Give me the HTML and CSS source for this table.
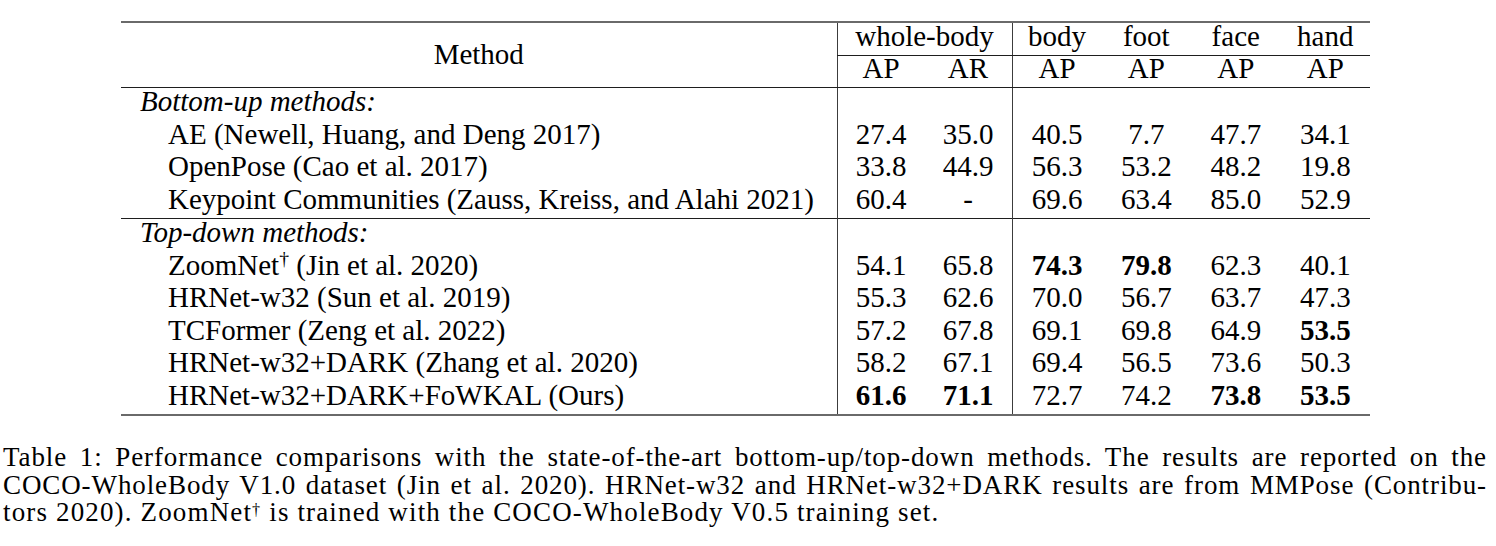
FILE: index.html
```html
<!DOCTYPE html>
<html lang="en">
<head>
<meta charset="utf-8">
<title>Table 1</title>
<link rel="stylesheet" href="styles.css">
</head>
<body>
<div class="page">
  <table class="results">
    <colgroup>
      <col class="c-method">
      <col class="c-wb">
      <col class="c-wb">
      <col class="c-part">
      <col class="c-part">
      <col class="c-part">
      <col class="c-part">
    </colgroup>
    <thead>
      <tr class="head1">
        <th rowspan="2" class="method-head">Method</th>
        <th colspan="2" class="vl under">whole-body</th>
        <th class="vl under">body</th>
        <th class="under">foot</th>
        <th class="under">face</th>
        <th class="under">hand</th>
      </tr>
      <tr class="head2">
        <th class="vl">AP</th>
        <th>AR</th>
        <th class="vl">AP</th>
        <th>AP</th>
        <th>AP</th>
        <th>AP</th>
      </tr>
    </thead>
    <tbody class="group">
      <tr><td class="group-label">Bottom-up methods:</td><td class="vl"></td><td></td><td class="vl"></td><td></td><td></td><td></td></tr>
      <tr><td class="name">AE (Newell, Huang, and Deng 2017)</td><td class="vl">27.4</td><td>35.0</td><td class="vl">40.5</td><td>7.7</td><td>47.7</td><td>34.1</td></tr>
      <tr><td class="name">OpenPose (Cao et al. 2017)</td><td class="vl">33.8</td><td>44.9</td><td class="vl">56.3</td><td>53.2</td><td>48.2</td><td>19.8</td></tr>
      <tr><td class="name">Keypoint Communities (Zauss, Kreiss, and Alahi 2021)</td><td class="vl">60.4</td><td>-</td><td class="vl">69.6</td><td>63.4</td><td>85.0</td><td>52.9</td></tr>
    </tbody>
    <tbody class="group">
      <tr><td class="group-label">Top-down methods:</td><td class="vl"></td><td></td><td class="vl"></td><td></td><td></td><td></td></tr>
      <tr><td class="name">ZoomNet<sup class="dagger">†</sup> (Jin et al. 2020)</td><td class="vl">54.1</td><td>65.8</td><td class="vl best">74.3</td><td class="best">79.8</td><td>62.3</td><td>40.1</td></tr>
      <tr><td class="name">HRNet-w32 (Sun et al. 2019)</td><td class="vl">55.3</td><td>62.6</td><td class="vl">70.0</td><td>56.7</td><td>63.7</td><td>47.3</td></tr>
      <tr><td class="name">TCFormer (Zeng et al. 2022)</td><td class="vl">57.2</td><td>67.8</td><td class="vl">69.1</td><td>69.8</td><td>64.9</td><td class="best">53.5</td></tr>
      <tr><td class="name">HRNet-w32+DARK (Zhang et al. 2020)</td><td class="vl">58.2</td><td>67.1</td><td class="vl">69.4</td><td>56.5</td><td>73.6</td><td>50.3</td></tr>
      <tr><td class="name">HRNet-w32+DARK+FoWKAL (Ours)</td><td class="vl best">61.6</td><td class="best">71.1</td><td class="vl">72.7</td><td>74.2</td><td class="best">73.8</td><td class="best">53.5</td></tr>
    </tbody>
  </table>

  <p class="caption">
    <span class="cap-line just">Table 1: Performance comparisons with the state-of-the-art bottom-up/top-down methods. The results are reported on the</span>
    <span class="cap-line just">COCO-WholeBody V1.0 dataset (Jin et al. 2020). HRNet-w32 and HRNet-w32+DARK results are from MMPose (Contribu-</span>
    <span class="cap-line last">tors 2020). ZoomNet<sup class="dagger cap-dagger">†</sup> is trained with the COCO-WholeBody V0.5 training set.</span>
  </p>
</div>
</body>
</html>
```

FILE: styles.css
```css
html, body {
  margin: 0;
  padding: 0;
  background: #ffffff;
}

body {
  font-family: "Liberation Serif", "Times New Roman", serif;
  color: #000;
}

.page {
  padding-top: 21px;
}

.results {
  margin-left: 121px;
  width: 1249px;
  table-layout: fixed;
  border-collapse: collapse;
  font-size: 29px;
  border-top: 2px solid #6a6a6a;
  border-bottom: 2px solid #6a6a6a;
}

.c-method { width: 716px; }
.c-wb { width: 87.5px; }
.c-part { width: 89.5px; }

.results th,
.results td {
  padding: 0 0 5px;
  line-height: 27.5px;
  font-weight: normal;
  text-align: center;
  white-space: nowrap;
  vertical-align: top;
}

.results .head1 th {
  padding-bottom: 4.5px;
}

.results .head2 th {
  line-height: 25px;
  padding-bottom: 6px;
  border-bottom: 1px solid #1e1e1e;
}

.results th.method-head {
  vertical-align: middle;
  border-bottom: 1px solid #1e1e1e;
  padding-bottom: 0;
}

.results th.under {
  border-bottom: 1px solid #1e1e1e;
}

.results .vl {
  border-left: 1px solid #3c3c3c;
}

.group + .group tr:first-child td {
  border-top: 1px solid #1e1e1e;
}

.results td.group-label {
  text-align: left;
  font-style: italic;
  padding-left: 19px;
}

.results td.name {
  text-align: left;
  padding-left: 47px;
}

.results td.best {
  font-weight: bold;
}

.dagger {
  font-size: 0.68em;
  line-height: 0;
  vertical-align: 0.5em;
}

.caption {
  margin: 28px 0 0 3px;
  width: 1484px;
  font-size: 27px;
  line-height: 27.7px;
  letter-spacing: 0.9px;
}

.cap-line {
  display: block;
  white-space: nowrap;
}

.cap-line.just {
  text-align: justify;
  text-align-last: justify;
}

.cap-line.last {
  letter-spacing: 1.15px;
}

.cap-dagger {
  font-size: 0.6em;
  vertical-align: 0.38em;
}
```
